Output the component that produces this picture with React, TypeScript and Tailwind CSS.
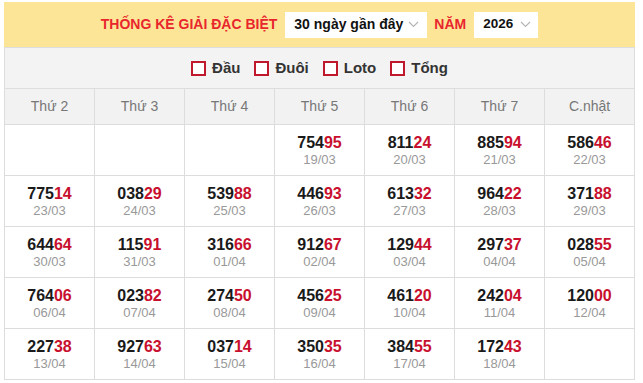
import React from "react";

type Cell = { n: string; d: string } | null;

const rows: Cell[][] = [
  [null, null, null, { n: "75495", d: "19/03" }, { n: "81124", d: "20/03" }, { n: "88594", d: "21/03" }, { n: "58646", d: "22/03" }],
  [{ n: "77514", d: "23/03" }, { n: "03829", d: "24/03" }, { n: "53988", d: "25/03" }, { n: "44693", d: "26/03" }, { n: "61332", d: "27/03" }, { n: "96422", d: "28/03" }, { n: "37188", d: "29/03" }],
  [{ n: "64464", d: "30/03" }, { n: "11591", d: "31/03" }, { n: "31666", d: "01/04" }, { n: "91267", d: "02/04" }, { n: "12944", d: "03/04" }, { n: "29737", d: "04/04" }, { n: "02855", d: "05/04" }],
  [{ n: "76406", d: "06/04" }, { n: "02382", d: "07/04" }, { n: "27450", d: "08/04" }, { n: "45625", d: "09/04" }, { n: "46120", d: "10/04" }, { n: "24204", d: "11/04" }, { n: "12000", d: "12/04" }],
  [{ n: "22738", d: "13/04" }, { n: "92763", d: "14/04" }, { n: "03714", d: "15/04" }, { n: "35035", d: "16/04" }, { n: "38455", d: "17/04" }, { n: "17243", d: "18/04" }, null],
];

const heads = ["Thứ 2", "Thứ 3", "Thứ 4", "Thứ 5", "Thứ 6", "Thứ 7", "C.nhật"];

function Chevron() {
  return (
    <svg width="11" height="7" viewBox="0 0 11 7" className="shrink-0">
      <polyline points="1,1 5.5,5.5 10,1" fill="none" stroke="#b5b5b5" strokeWidth="1.2" />
    </svg>
  );
}

function Check({ label }: { label: string }) {
  return (
    <div className="flex items-center gap-[6px]">
      <span className="block w-[15px] h-[15px] border-2 border-[#c0182c] bg-white" />
      <span className="text-[15px] font-bold text-[#333]">{label}</span>
    </div>
  );
}

export default function App() {
  return (
    <div className="bg-white w-[643px] h-[383px]" style={{ fontFamily: '"Liberation Sans", Arial, sans-serif' }}>
      <div className="ml-[4px] pt-[2px] w-[631px]">
        <div className="h-[45px] bg-[#fde598] flex items-center justify-center">
          <span className="text-[14px] font-bold text-[#e8262c] mr-[8px] whitespace-nowrap">THỐNG KÊ GIẢI ĐẶC BIỆT</span>
          <div className="h-[26px] w-[142px] bg-white flex items-center justify-between pl-[9px] pr-[8px]">
            <span className="text-[14px] font-bold text-[#111] whitespace-nowrap">30 ngày gần đây</span>
            <Chevron />
          </div>
          <span className="text-[14px] font-bold text-[#e8262c] ml-[7px] mr-[8px]">NĂM</span>
          <div className="h-[26px] w-[64px] bg-white flex items-center justify-between pl-[9px] pr-[7px]">
            <span className="text-[13.5px] font-bold text-[#111]">2026</span>
            <Chevron />
          </div>
        </div>
        <div className="h-[41px] bg-[#f3f3f3] border-t border-x border-[#dddddd] flex items-center justify-center gap-[14px]">
          <Check label="Đầu" />
          <Check label="Đuôi" />
          <Check label="Loto" />
          <Check label="Tổng" />
        </div>
        <div className="grid grid-cols-[repeat(7,90px)] border-l border-t border-[#dddddd]">
          {heads.map((h) => (
            <div key={h} className="h-[36px] bg-[#f2f2f2] border-r border-b border-[#dddddd] flex items-center justify-center text-[14px] text-[#777]">
              {h}
            </div>
          ))}
          {rows.flat().map((c, i) => (
            <div key={i} className="h-[51px] border-r border-b border-[#dddddd] flex flex-col items-center justify-center">
              {c && (
                <>
                  <div className="text-[16px] font-bold leading-[18px] text-[#1a1a1a]">
                    {c.n.slice(0, 3)}
                    <span className="text-[#c8102e]">{c.n.slice(3)}</span>
                  </div>
                  <div className="text-[13px] leading-[15px] text-[#999]">{c.d}</div>
                </>
              )}
            </div>
          ))}
        </div>
      </div>
    </div>
  );
}
